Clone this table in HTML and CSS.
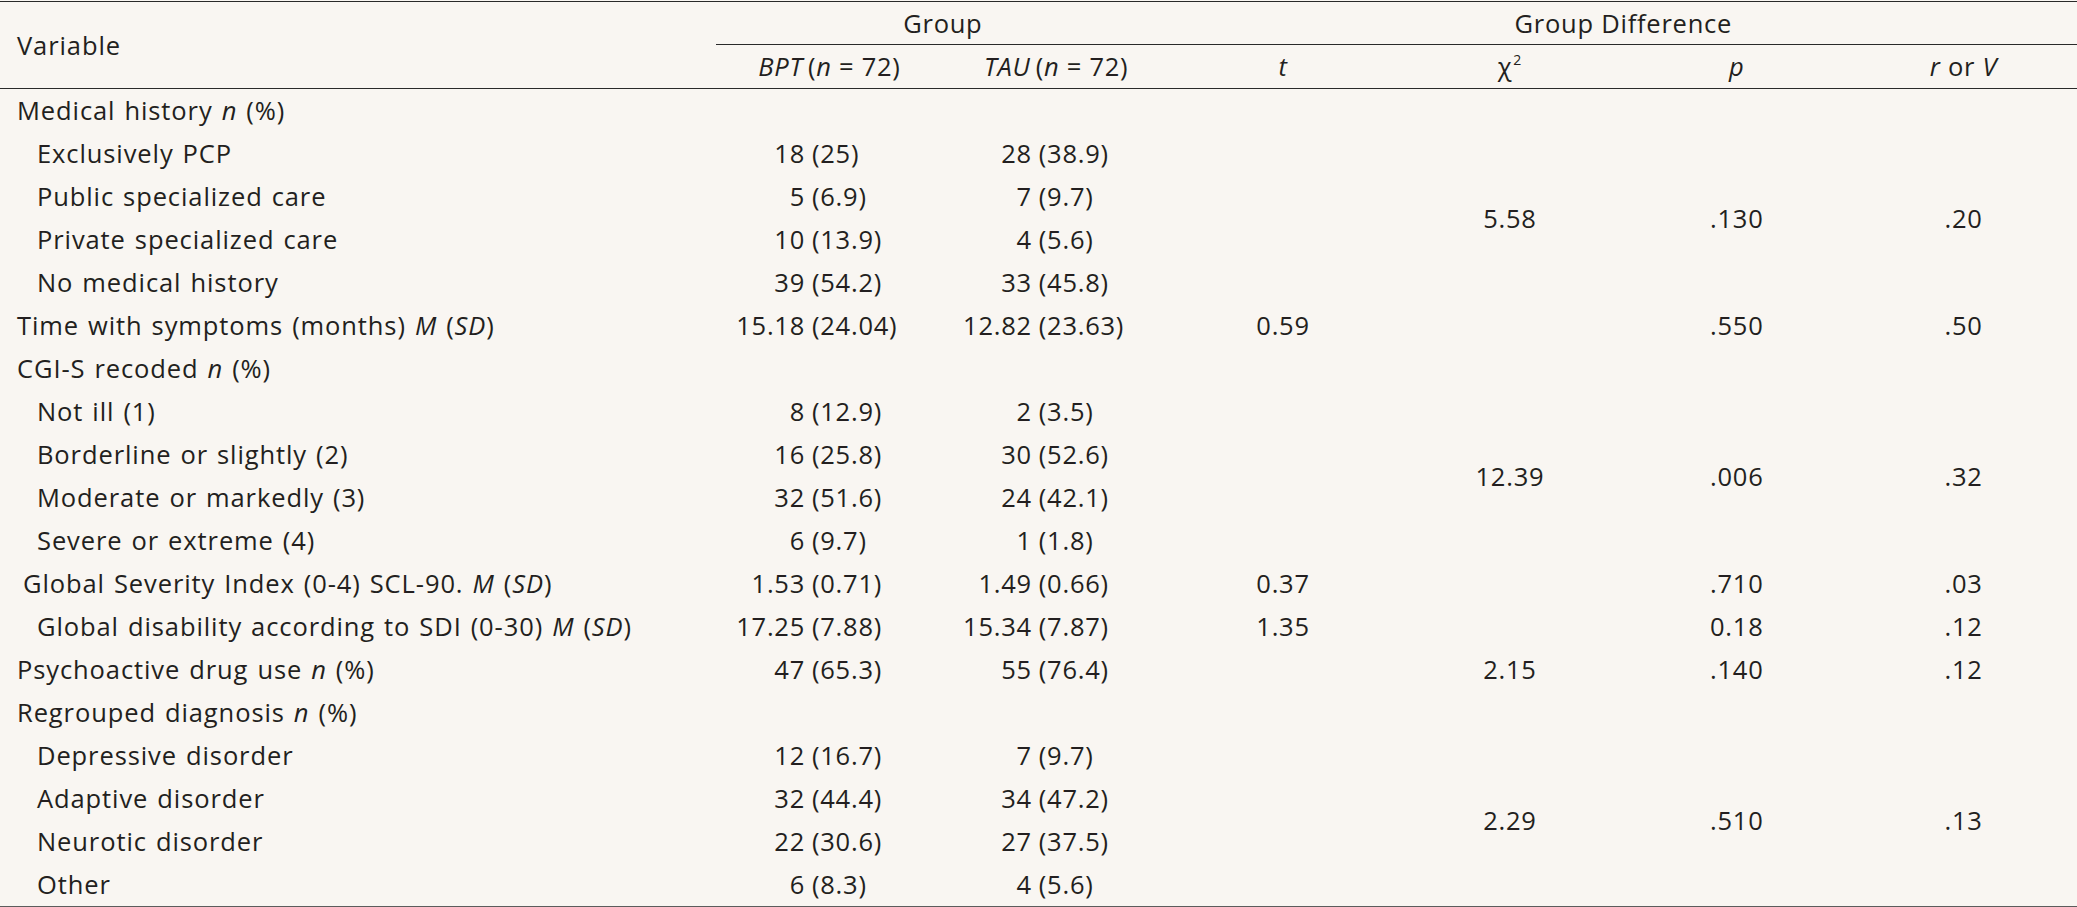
FILE: index.html
```html
<!DOCTYPE html>
<html lang="en">
<head>
<meta charset="utf-8">
<title>Table</title>
<link rel="stylesheet" href="styles.css">
</head>
<body>
<div class="table">
  <div class="cell var head-var"><span>Variable</span></div>
  <div class="cell head span-c2 rule"><span>Group</span></div>
  <div class="cell head span-c4 rule"><span>Group Difference</span></div>
  <div class="cell head rule"><span><i>BPT</i>&thinsp;(<i>n</i> = 72)</span></div>
  <div class="cell head rule"><span><i>TAU</i>&thinsp;(<i>n</i> = 72)</span></div>
  <div class="cell head rule"><span><i>t</i></span></div>
  <div class="cell head rule"><span>χ<sup>2</sup></span></div>
  <div class="cell head rule"><span><i>p</i></span></div>
  <div class="cell head rule"><span><i>r</i> or <i>V</i></span></div>

  <div class="cell var section"><span>Medical history <i>n</i> (%)</span></div>

  <div class="cell var ind"><span>Exclusively PCP</span></div>
  <div class="cell pair"><span class="num">18</span><span class="pct">(25)</span></div>
  <div class="cell pair"><span class="num">28</span><span class="pct">(38.9)</span></div>
  <div class="cell"></div>
  <div class="cell span-r4">5.58</div>
  <div class="cell span-r4">.130</div>
  <div class="cell span-r4">.20</div>

  <div class="cell var ind"><span>Public specialized care</span></div>
  <div class="cell pair"><span class="num">5</span><span class="pct">(6.9)</span></div>
  <div class="cell pair"><span class="num">7</span><span class="pct">(9.7)</span></div>
  <div class="cell"></div>

  <div class="cell var ind"><span>Private specialized care</span></div>
  <div class="cell pair"><span class="num">10</span><span class="pct">(13.9)</span></div>
  <div class="cell pair"><span class="num">4</span><span class="pct">(5.6)</span></div>
  <div class="cell"></div>

  <div class="cell var ind"><span>No medical history</span></div>
  <div class="cell pair"><span class="num">39</span><span class="pct">(54.2)</span></div>
  <div class="cell pair"><span class="num">33</span><span class="pct">(45.8)</span></div>
  <div class="cell"></div>

  <div class="cell var"><span>Time with symptoms (months) <i>M</i> (<i>SD</i>)</span></div>
  <div class="cell pair"><span class="num">15.18</span><span class="pct">(24.04)</span></div>
  <div class="cell pair"><span class="num">12.82</span><span class="pct">(23.63)</span></div>
  <div class="cell">0.59</div>
  <div class="cell"></div>
  <div class="cell">.550</div>
  <div class="cell">.50</div>

  <div class="cell var section"><span>CGI-S recoded <i>n</i> (%)</span></div>

  <div class="cell var ind"><span>Not ill (1)</span></div>
  <div class="cell pair"><span class="num">8</span><span class="pct">(12.9)</span></div>
  <div class="cell pair"><span class="num">2</span><span class="pct">(3.5)</span></div>
  <div class="cell"></div>
  <div class="cell span-r4">12.39</div>
  <div class="cell span-r4">.006</div>
  <div class="cell span-r4">.32</div>

  <div class="cell var ind"><span>Borderline or slightly (2)</span></div>
  <div class="cell pair"><span class="num">16</span><span class="pct">(25.8)</span></div>
  <div class="cell pair"><span class="num">30</span><span class="pct">(52.6)</span></div>
  <div class="cell"></div>

  <div class="cell var ind"><span>Moderate or markedly (3)</span></div>
  <div class="cell pair"><span class="num">32</span><span class="pct">(51.6)</span></div>
  <div class="cell pair"><span class="num">24</span><span class="pct">(42.1)</span></div>
  <div class="cell"></div>

  <div class="cell var ind"><span>Severe or extreme (4)</span></div>
  <div class="cell pair"><span class="num">6</span><span class="pct">(9.7)</span></div>
  <div class="cell pair"><span class="num">1</span><span class="pct">(1.8)</span></div>
  <div class="cell"></div>

  <div class="cell var ind-s"><span>Global Severity Index (0-4) SCL-90. <i>M</i> (<i>SD</i>)</span></div>
  <div class="cell pair"><span class="num">1.53</span><span class="pct">(0.71)</span></div>
  <div class="cell pair"><span class="num">1.49</span><span class="pct">(0.66)</span></div>
  <div class="cell">0.37</div>
  <div class="cell"></div>
  <div class="cell">.710</div>
  <div class="cell">.03</div>

  <div class="cell var ind"><span>Global disability according to SDI (0-30) <i>M</i> (<i>SD</i>)</span></div>
  <div class="cell pair"><span class="num">17.25</span><span class="pct">(7.88)</span></div>
  <div class="cell pair"><span class="num">15.34</span><span class="pct">(7.87)</span></div>
  <div class="cell">1.35</div>
  <div class="cell"></div>
  <div class="cell">0.18</div>
  <div class="cell">.12</div>

  <div class="cell var"><span>Psychoactive drug use <i>n</i> (%)</span></div>
  <div class="cell pair"><span class="num">47</span><span class="pct">(65.3)</span></div>
  <div class="cell pair"><span class="num">55</span><span class="pct">(76.4)</span></div>
  <div class="cell"></div>
  <div class="cell">2.15</div>
  <div class="cell">.140</div>
  <div class="cell">.12</div>

  <div class="cell var section"><span>Regrouped diagnosis <i>n</i> (%)</span></div>

  <div class="cell var ind"><span>Depressive disorder</span></div>
  <div class="cell pair"><span class="num">12</span><span class="pct">(16.7)</span></div>
  <div class="cell pair"><span class="num">7</span><span class="pct">(9.7)</span></div>
  <div class="cell"></div>
  <div class="cell span-r4">2.29</div>
  <div class="cell span-r4">.510</div>
  <div class="cell span-r4">.13</div>

  <div class="cell var ind"><span>Adaptive disorder</span></div>
  <div class="cell pair"><span class="num">32</span><span class="pct">(44.4)</span></div>
  <div class="cell pair"><span class="num">34</span><span class="pct">(47.2)</span></div>
  <div class="cell"></div>

  <div class="cell var ind"><span>Neurotic disorder</span></div>
  <div class="cell pair"><span class="num">22</span><span class="pct">(30.6)</span></div>
  <div class="cell pair"><span class="num">27</span><span class="pct">(37.5)</span></div>
  <div class="cell"></div>

  <div class="cell var ind"><span>Other</span></div>
  <div class="cell pair"><span class="num">6</span><span class="pct">(8.3)</span></div>
  <div class="cell pair"><span class="num">4</span><span class="pct">(5.6)</span></div>
  <div class="cell"></div>
</div>
</body>
</html>
```

FILE: styles.css
```css
html, body {
  margin: 0;
  padding: 0;
  background: #f9f6f2;
}

body {
  font-family: "Open Sans", "Noto Sans", "DejaVu Sans", sans-serif;
  font-size: 25.5px;
  letter-spacing: 0.75px;
  line-height: 1.36;
  color: #231f20;
}

.table {
  margin-top: 1px;
  border-top: 1px solid #2a2a2a;
  border-bottom: 2px solid #5c5c5c;
  display: grid;
  grid-template-columns: 716px repeat(6, 1fr);
  grid-template-rows: 43px 44px repeat(19, 43px);
}

.cell {
  display: flex;
  align-items: center;
  justify-content: center;
  white-space: nowrap;
  min-width: 0;
}

.cell i {
  font-style: italic;
}

.var {
  justify-content: flex-start;
  padding-left: 17px;
  letter-spacing: 0.9px;
  word-spacing: 1.5px;
}

.var.ind {
  padding-left: 37px;
}

.var.ind-s {
  padding-left: 23px;
}

.head-var {
  grid-row: span 2;
  border-bottom: 1px solid #2a2a2a;
}

.rule {
  border-bottom: 1px solid #2a2a2a;
}

.span-c2 {
  grid-column: span 2;
}

.span-c4 {
  grid-column: span 4;
}

.span-r4 {
  grid-row: span 4;
}

.section {
  grid-column: 1 / -1;
}

.head sup {
  font-size: 0.55em;
  line-height: 0;
  position: relative;
  top: -0.15em;
  margin-left: 1px;
}

.pair {
  justify-content: flex-start;
}

.pair .num {
  width: 89px;
  text-align: right;
}

.pair .pct {
  margin-left: 7px;
}
```
